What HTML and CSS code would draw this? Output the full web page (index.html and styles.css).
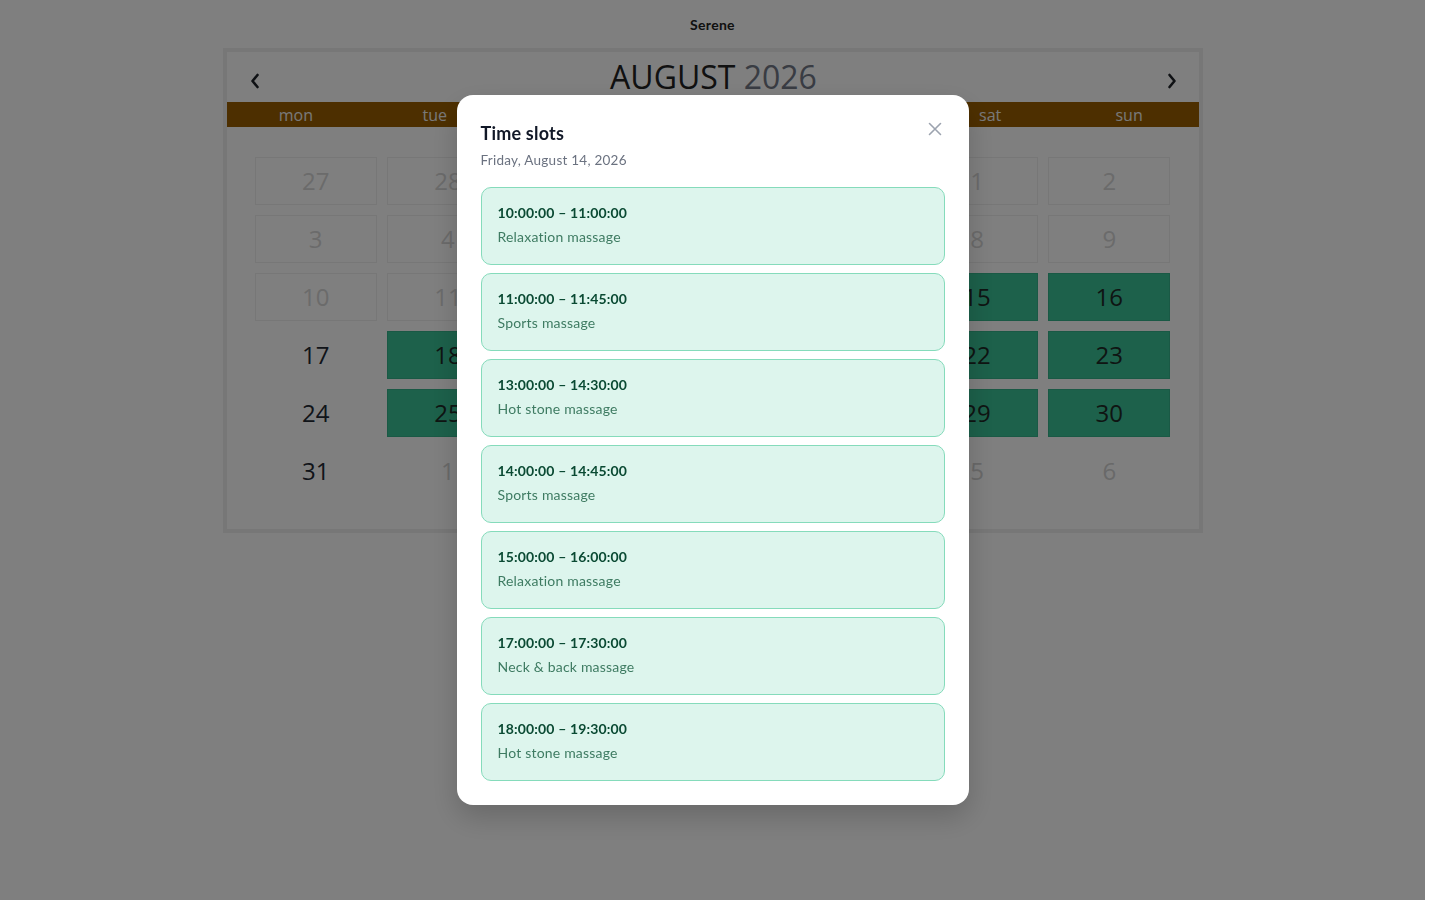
FILE: index.html
```html
<!DOCTYPE html>
<html lang="en">
<head>
<meta charset="utf-8">
<title>Serene – Booking</title>
<link rel="stylesheet" href="styles.css">
</head>
<body>
<div class="app">
  <header class="brand">Serene</header>
  <section class="calendar">
    <div class="cal-head">
      <button class="nav" aria-label="Previous month">
        <svg width="10" height="16" viewBox="0 0 10 16"><path d="M7.5 2 L2.5 8 L7.5 14" fill="none" stroke="#1f2329" stroke-width="2.6" stroke-linecap="round" stroke-linejoin="round"/></svg>
      </button>
      <h1 class="month"><span class="m">AUGUST</span> <span class="y">2026</span></h1>
      <button class="nav" aria-label="Next month">
        <svg width="10" height="16" viewBox="0 0 10 16"><path d="M2.5 2 L7.5 8 L2.5 14" fill="none" stroke="#1f2329" stroke-width="2.6" stroke-linecap="round" stroke-linejoin="round"/></svg>
      </button>
    </div>
    <div class="weekdays">
      <span>mon</span><span>tue</span><span>wed</span><span>thu</span><span>fri</span><span>sat</span><span>sun</span>
    </div>
    <div class="days">
      <div class="day off">27</div><div class="day off">28</div><div class="day off">29</div><div class="day off">30</div><div class="day off">31</div><div class="day off">1</div><div class="day off">2</div>
      <div class="day off">3</div><div class="day off">4</div><div class="day off">5</div><div class="day off">6</div><div class="day off">7</div><div class="day off">8</div><div class="day off">9</div>
      <div class="day off">10</div><div class="day off">11</div><div class="day off">12</div><div class="day off">13</div><div class="day open">14</div><div class="day open">15</div><div class="day open">16</div>
      <div class="day">17</div><div class="day open">18</div><div class="day open">19</div><div class="day open">20</div><div class="day open">21</div><div class="day open">22</div><div class="day open">23</div>
      <div class="day">24</div><div class="day open">25</div><div class="day open">26</div><div class="day open">27</div><div class="day open">28</div><div class="day open">29</div><div class="day open">30</div>
      <div class="day">31</div><div class="day next">1</div><div class="day next">2</div><div class="day next">3</div><div class="day next">4</div><div class="day next">5</div><div class="day next">6</div>
    </div>
  </section>
</div>

<div class="overlay">
  <div class="modal" role="dialog" aria-labelledby="slots-title">
    <button class="close" aria-label="Close">
      <svg width="14" height="14" viewBox="0 0 14 14"><path d="M1.5 1.5 L12.5 12.5 M12.5 1.5 L1.5 12.5" fill="none" stroke="#9ca3af" stroke-width="1.6" stroke-linecap="round"/></svg>
    </button>
    <h2 id="slots-title" class="modal-title">Time slots</h2>
    <p class="modal-sub">Friday, August 14, 2026</p>
    <ul class="slots">
      <li class="slot"><span class="time">10:00:00 – 11:00:00</span><span class="desc">Relaxation massage</span></li>
      <li class="slot"><span class="time">11:00:00 – 11:45:00</span><span class="desc">Sports massage</span></li>
      <li class="slot"><span class="time">13:00:00 – 14:30:00</span><span class="desc">Hot stone massage</span></li>
      <li class="slot"><span class="time">14:00:00 – 14:45:00</span><span class="desc">Sports massage</span></li>
      <li class="slot"><span class="time">15:00:00 – 16:00:00</span><span class="desc">Relaxation massage</span></li>
      <li class="slot"><span class="time">17:00:00 – 17:30:00</span><span class="desc">Neck &amp; back massage</span></li>
      <li class="slot"><span class="time">18:00:00 – 19:30:00</span><span class="desc">Hot stone massage</span></li>
    </ul>
  </div>
</div>
</body>
</html>
```

FILE: styles.css
```css
* { box-sizing: border-box; }

html, body {
  margin: 0;
  padding: 0;
  background: #ffffff;
}

body {
  font-family: "Lato", "Noto Sans", sans-serif;
  color: #222222;
}

.app {
  width: 1425px;
  padding-top: 16px;
  display: flex;
  flex-direction: column;
  align-items: center;
}

.brand {
  font-family: "Lato", sans-serif;
  font-size: 14px;
  font-weight: 700;
  line-height: 18px;
  letter-spacing: 0.3px;
  color: #222222;
  margin-bottom: 14px;
}

.calendar {
  width: 980px;
  border: 4px solid #eeeeee;
  background: #ffffff;
  font-family: "Open Sans", sans-serif;
}

.cal-head {
  height: 50px;
  display: flex;
  align-items: center;
  justify-content: space-between;
  padding: 0 19px 0 21px;
}

.nav {
  width: 14px;
  height: 20px;
  padding: 0;
  margin-top: 8px;
  border: 0;
  background: none;
  display: flex;
  align-items: center;
  justify-content: center;
}

.month {
  margin: 0;
  font-size: 32px;
  font-weight: 400;
  line-height: 40px;
  letter-spacing: 0;
}

.month .m { color: #222222; }
.month .y { color: #727886; }

.weekdays {
  height: 25px;
  background: #9b5f00;
  display: grid;
  grid-template-columns: repeat(7, 1fr);
  align-items: center;
  text-align: center;
  font-size: 16px;
  line-height: 25px;
  padding-top: 1px;
  color: #f2f2f2;
}

.days {
  display: grid;
  grid-template-columns: repeat(7, 1fr);
  grid-auto-rows: 48px;
  gap: 10px;
  padding: 30px 28px 34px;
}

.day {
  display: flex;
  align-items: center;
  justify-content: center;
  font-size: 24px;
  color: #222833;
  border: 1px solid transparent;
  padding-bottom: 2px;
}

.day.off {
  border-color: #efefef;
  color: #d6d6d6;
}

.day.next {
  color: #d2d2d2;
}

.day.open {
  background: #3ac296;
  border-color: #35b38a;
  color: #1e2a26;
}

/* modal */
.overlay {
  position: fixed;
  top: 0;
  left: 0;
  bottom: 0;
  width: 1425px;
  background: rgba(0, 0, 0, 0.5);
  display: flex;
  align-items: center;
  justify-content: center;
}

.modal {
  position: relative;
  width: 512px;
  background: #ffffff;
  border-radius: 16px;
  padding: 24px;
  box-shadow: 0 12px 28px rgba(0, 0, 0, 0.18);
  font-family: "Lato", "Noto Sans", sans-serif;
}

.close {
  position: absolute;
  top: 22px;
  right: 22px;
  width: 24px;
  height: 24px;
  padding: 0;
  border: 0;
  background: none;
  display: flex;
  align-items: center;
  justify-content: center;
}

.modal-title {
  margin: 0;
  font-size: 18px;
  font-weight: 700;
  line-height: 28px;
  letter-spacing: 0.2px;
  color: #111827;
}

.modal-sub {
  margin: 3px 0 0;
  font-size: 13.5px;
  line-height: 20px;
  letter-spacing: 0.25px;
  color: #6b7280;
}

.slots {
  list-style: none;
  margin: 17px 0 0;
  padding: 0;
  display: flex;
  flex-direction: column;
  gap: 8px;
}

.slot {
  height: 78px;
  display: flex;
  flex-direction: column;
  justify-content: center;
  gap: 6px;
  padding: 0 16px 2px;
  background: #ddf5ed;
  border: 1px solid #85dbbb;
  border-radius: 10px;
}

.time {
  font-size: 14px;
  font-weight: 700;
  line-height: 18px;
  color: #0a4a33;
  letter-spacing: 0.15px;
}

.desc {
  font-size: 14px;
  line-height: 18px;
  letter-spacing: 0.2px;
  color: #3e7b62;
}
```
